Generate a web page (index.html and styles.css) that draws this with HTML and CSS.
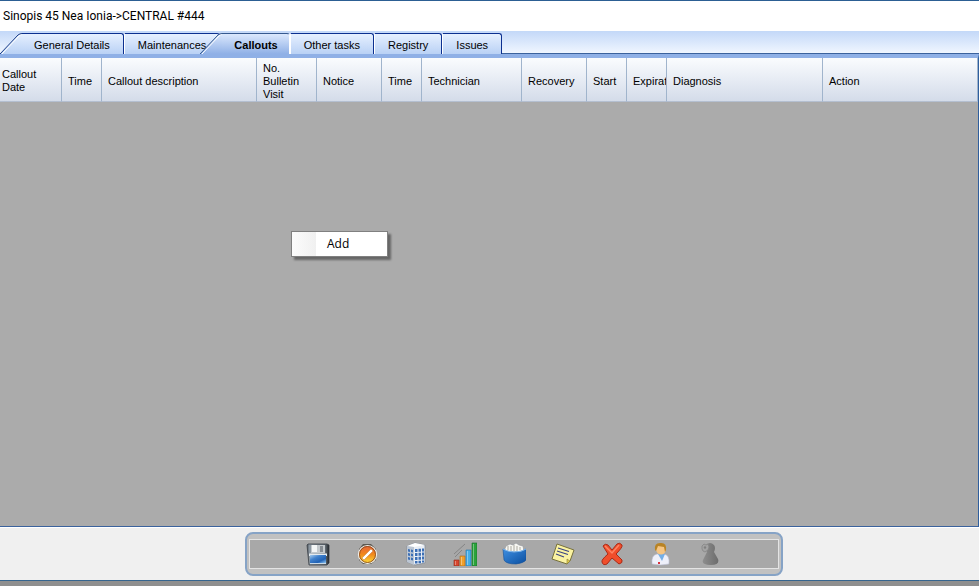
FILE: index.html
```html
<!DOCTYPE html>
<html lang="en">
<head>
    <meta charset="UTF-8">
    <meta name="viewport" content="width=device-width, initial-scale=1.0">
    <title>Sinopis 45 Nea Ionia-&gt;CENTRAL #444</title>
    <link rel="stylesheet" href="styles.css">
</head>
<body>
    <header class="title-bar">Sinopis 45 Nea Ionia-&gt;CENTRAL #444</header>

    <nav class="tabs" role="tablist">
        <button class="tab" role="tab">
            <svg class="slant" viewBox="0 0 22 21">
                <defs>
                    <linearGradient id="tabFill" x1="0" y1="0" x2="0" y2="1">
                        <stop offset="0" stop-color="#e6f0ff"/>
                        <stop offset="1" stop-color="#b9d1f5"/>
                    </linearGradient>
                </defs>
                <path d="M0 21L18 2Q20 .5 22 .5V21Z" fill="url(#tabFill)"/>
                <path d="M2 21L19 3Q20 1.500 22 1.500" fill="none" stroke="#fff"/>
                <path d="M0 21L18 2Q20 .5 22 .5" fill="none" stroke="#1a3c86"/>
            </svg>
            <span class="tab-label">General Details</span>
        </button>
        <button class="tab" role="tab"><span class="tab-label">Maintenances</span></button>
        <button class="tab active" role="tab" aria-selected="true">
            <svg class="slant" viewBox="0 0 22 21">
                <defs>
                    <linearGradient id="activeFill" x1="0" y1="0" x2="0" y2="1">
                        <stop offset="0" stop-color="#dbe8fd"/>
                        <stop offset="1" stop-color="#8fb0e6"/>
                    </linearGradient>
                </defs>
                <path d="M0 21L18 2Q20 .5 22 .5V21Z" fill="url(#activeFill)"/>
                <path d="M2 21L19 3Q20 1.500 22 1.500" fill="none" stroke="#fff"/>
                <path d="M0 21L18 2Q20 .5 22 .5" fill="none" stroke="#35598f"/>
            </svg>
            <span class="tab-label">Callouts</span>
        </button>
        <button class="tab" role="tab"><span class="tab-label">Other tasks</span></button>
        <button class="tab" role="tab"><span class="tab-label">Registry</span></button>
        <button class="tab" role="tab"><span class="tab-label">Issues</span></button>
    </nav>

    <main class="panel">
        <table class="grid">
            <colgroup>
                <col class="w62"><col class="w40"><col class="w155"><col class="w60">
                <col class="w65"><col class="w40"><col class="w100"><col class="w65">
                <col class="w40"><col class="w40"><col class="w156"><col>
            </colgroup>
            <thead>
                <tr>
                    <th>Callout Date</th>
                    <th>Time</th>
                    <th>Callout description</th>
                    <th>No. Bulletin Visit</th>
                    <th>Notice</th>
                    <th>Time</th>
                    <th>Technician</th>
                    <th>Recovery</th>
                    <th>Start</th>
                    <th>Expirat</th>
                    <th>Diagnosis</th>
                    <th>Action</th>
                </tr>
            </thead>
        </table>
        <div class="context-menu" role="menu">
            <button class="menu-item" role="menuitem">Add</button>
        </div>
    </main>

    <footer class="bottom">
        <div class="toolbar">
            <div class="toolbar-inner">
                <button class="tool" aria-label="Save">
                    <svg viewBox="0 0 24 24">
                        <defs>
                            <linearGradient id="disk" x1="0" y1="0" x2="1" y2="0">
                                <stop offset="0" stop-color="#4a525a"/><stop offset=".12" stop-color="#8f9aa4"/>
                                <stop offset=".85" stop-color="#5f6870"/><stop offset="1" stop-color="#1b1e22"/>
                            </linearGradient>
                            <linearGradient id="diskLabel" x1="0" y1="0" x2="1" y2="1">
                                <stop offset="0" stop-color="#a8cdf0"/><stop offset=".35" stop-color="#3f80cc"/>
                                <stop offset=".7" stop-color="#2161b4"/><stop offset="1" stop-color="#8fc8f5"/>
                            </linearGradient>
                        </defs>
                        <path d="M2 2H21L23 3V21L21 23H3L1 3Z" fill="url(#disk)" stroke="#3b4046" stroke-width=".8"/>
                        <rect x="5" y="3" width="14" height="8" fill="#c4c9cd"/>
                        <path d="M6 3h5v7H6z" fill="#f4f6f7"/>
                        <path d="M14 4h3v6h-3z" fill="#868c92"/>
                        <path d="M3 11.500h18v2.500H3z" fill="#e3e9ee"/>
                        <path d="M4 13h16v8H4z" fill="url(#diskLabel)"/>
                        <path d="M4 21h16v1H4z" fill="#c9d9e6"/>
                    </svg>
                </button>
                <button class="tool" aria-label="Cancel">
                    <svg viewBox="0 0 24 24">
                        <defs>
                            <linearGradient id="orange" x1="0" y1="0" x2="0" y2="1">
                                <stop offset="0" stop-color="#e8613a"/><stop offset=".5" stop-color="#f18a1c"/><stop offset="1" stop-color="#ffe13a"/>
                            </linearGradient>
                        </defs>
                        <path d="M8 2h8l5 5v11l-5 4H8l-4-4V7z" fill="#5c5852"/>
                        <circle cx="12.500" cy="12.500" r="9" fill="url(#orange)" stroke="#f2efe8" stroke-width="1.200"/>
                        <circle cx="12.500" cy="12.500" r="8" fill="none" stroke="#8a4a1a" stroke-width=".9"/>
                        <path d="M7 16L16 7L18 9L9 18Z" fill="#fff" stroke="#c07a3a" stroke-width=".5"/>
                    </svg>
                </button>
                <button class="tool" aria-label="Building">
                    <svg viewBox="0 0 24 24">
                        <path d="M3 4L11 1L21 3V21L11 23L3 20Z" fill="#e9eef5" stroke="#858d98" stroke-width=".8"/>
                        <path d="M3 4L11 1L21 3L10 5Z" fill="#fff"/>
                        <path d="M3 4L10 5V23L3 20Z" fill="#bcc6d3"/>
                        <g fill="#3c6fb5">
                            <path d="M4 7l2 .5v2.500l-2-.5zM7 7.500l2 .5v2.500l-2-.5zM4 11l2 .5V14l-2-.5zM7 11.500l2 .5v2.500l-2-.5zM4 15l2 .5V18l-2-.5zM7 15.500l2 .5v2.500l-2-.5z"/>
                            <path d="M11 7h2.500v3H11zM14.500 6.700H17v3h-2.500zM18 6.400h2v3h-2zM11 11h2.500v3H11zM14.500 10.800H17v3h-2.500zM18 10.500h2v3h-2zM11 15h2.500v3H11zM14.500 14.800H17v3h-2.500zM18 14.500h2v3h-2zM11 19h2.500v2.500H11zM14.500 18.800H17v2.500h-2.500zM18 18.500h2v2h-2z"/>
                        </g>
                    </svg>
                </button>
                <button class="tool" aria-label="Statistics">
                    <svg viewBox="0 0 24 24">
                        <path d="M1 12L12 2M2 15L9 8" stroke="#858585" fill="none"/>
                        <path d="M1 18h5v6H1z" fill="#d8482f" stroke="#8f2a1a" stroke-width=".6"/>
                        <path d="M7 14h5v10H7z" fill="#f0a02c" stroke="#ad6a14" stroke-width=".6"/>
                        <path d="M13 8h5v16h-5z" fill="#45aee8" stroke="#2474aa" stroke-width=".6"/>
                        <path d="M19 1h5v23h-5z" fill="#2ba33b" stroke="#16682a" stroke-width=".6"/>
                        <path d="M2.500 19v4M8.500 15v8M14.500 9v14M20.500 2v21" stroke="#fff" stroke-opacity=".35"/>
                    </svg>
                </button>
                <button class="tool" aria-label="Archive">
                    <svg viewBox="0 0 24 24">
                        <defs>
                            <linearGradient id="box" x1="0" y1="0" x2="1" y2="1">
                                <stop offset="0" stop-color="#3f8fe2"/><stop offset="1" stop-color="#0b4f9f"/>
                            </linearGradient>
                        </defs>
                        <path d="M2 9L4 4L8 2L11 3L14 1L17 3L21 4L22 9L12 12Z" fill="#f7f7f2" stroke="#8f9298" stroke-width=".6"/>
                        <path d="M6 4v4M9 4v5M12 3v6M15 4v5M18 5v3" stroke="#aaa89f"/>
                        <path d="M1 7Q6 10 12 10Q20 10 24 7V18Q22 21 14 22Q4 22 2 18Z" fill="url(#box)" stroke="#14519a" stroke-width=".6"/>
                        <path d="M1 7Q6 10 12 10Q20 10 24 7" fill="none" stroke="#82bbf0"/>
                    </svg>
                </button>
                <button class="tool" aria-label="Notes">
                    <svg viewBox="0 0 24 24">
                        <path d="M6 2L23 8L19 19L16 22L1 17Z" fill="#fbf3a2" stroke="#77713d"/>
                        <path d="M19 19L16 22L16 17Z" fill="#e2c949" stroke="#857c3b" stroke-width=".6"/>
                        <path d="M7 6L18 9.500M6 9L17 12.500M5 12L13 15" stroke="#3a4585" stroke-width="1.200"/>
                    </svg>
                </button>
                <button class="tool" aria-label="Delete">
                    <svg viewBox="0 0 24 24">
                        <path d="M3 4Q5 1 8 3L12 8L17 2Q20 0 22 3Q23 5 16 12L22 18Q23 21 19 22L12 16L7 22Q3 24 2 20Q1 18 8 12Z" fill="#f04e2b" stroke="#a92a17" stroke-linejoin="round"/>
                        <path d="M5 4L12 11L19 3" fill="none" stroke="#ff8462" stroke-width="1.500"/>
                    </svg>
                </button>
                <button class="tool" aria-label="User">
                    <svg viewBox="0 0 24 24">
                        <path d="M3 22Q2 13 8 12H15Q21 13 20 22Q12 24 3 22Z" fill="#eef0fa" stroke="#b5b8cc" stroke-width=".6"/>
                        <path d="M9 12L13 19L16 12Z" fill="#74aee6"/>
                        <ellipse cx="12" cy="7" rx="5" ry="5.500" fill="#f6c583"/>
                        <path d="M6 8Q5 1 11 1Q18 0 17 8L16 10L15 5L9 4L7 9Z" fill="#b88324"/>
                        <path d="M9 20h2v2H9z" fill="#d8323c"/>
                    </svg>
                </button>
                <button class="tool" aria-label="Contact">
                    <svg viewBox="0 0 24 24">
                        <defs>
                            <linearGradient id="pawn" x1="0" y1="0" x2="1" y2="0">
                                <stop offset="0" stop-color="#8e8e8e"/><stop offset="1" stop-color="#6c6c6c"/>
                            </linearGradient>
                        </defs>
                        <path d="M9 10Q6 5 8 3Q12 -1 16 3Q18 6 16 10L20 17Q22 23 13 23Q3 23 5 18Z" fill="url(#pawn)"/>
                        <path d="M4 4l2-2 2 1 2-1 1 3-1 3-3 2-2-1-1-2z" fill="#a3a3a3" stroke="#858585" stroke-width=".8"/>
                        <circle cx="7" cy="5.500" r="1.200" fill="#808080"/>
                    </svg>
                </button>
            </div>
        </div>
    </footer>
</body>
</html>
```
FILE: styles.css
```css
* {
    box-sizing: border-box;
}
body {
    display: flex;
    flex-direction: column;
    min-height: 100vh;
    margin: 0;
    font-family: "Liberation Sans", Arial, sans-serif;
    font-size: 11px;
    color: #000;
    background-color: #8f8f8f;
}
button {
    padding: 0;
    border: none;
    background: none;
    font: inherit;
    color: inherit;
}
.title-bar {
    height: 31px;
    padding: 0 3px;
    border-top: 1px solid #2c5f93;
    background-color: #fff;
    font-family: Roboto, sans-serif;
    font-size: 12px;
    line-height: 30px;
}

/* tabs */
.tabs {
    display: flex;
    height: 23px;
    padding-top: 2px;
    background: linear-gradient(#c3d8f8, #f0f6ff);
    border-bottom: 1px solid #3b629d;
}
.tab {
    display: flex;
    height: 21px;
}
.slant {
    width: 22px;
    height: 21px;
}
.tab-label {
    height: 21px;
    padding: 0 13px;
    border-top: 1px solid #0c3090;
    border-left: 1px solid #fff;
    border-right: 1px solid #0c3090;
    border-radius: 0 3px 0 0;
    background: linear-gradient(#e6f0ff, #b9d1f5);
    line-height: 22px;
}
.slant + .tab-label {
    padding-left: 12px;
    border-left: none;
}
.active {
    position: relative;
    margin-left: -20px;
    font-weight: bold;
}
.active .tab-label {
    padding-right: 11px;
    border-right-color: #fff;
    border-top-color: #35598f;
    background: linear-gradient(#dbe8fd, #8fb0e6);
}

/* callout grid */
.panel {
    position: relative;
    flex: 1;
    border-top: 4px solid #8fb0e6;
    border-right: 1px solid #2f5f9e;
    border-bottom: 1px solid #3b629d;
    background-color: #ababab;
}
.grid {
    width: 100%;
    table-layout: fixed;
    border-collapse: separate;
    border-spacing: 0;
    background: linear-gradient(#fafcfe, #d3dbe9);
}
.grid th {
    height: 44px;
    padding: 3px 0 0 6px;
    border-right: 1px solid #a0b4cc;
    border-bottom: 1px solid #b4bfd0;
    overflow: hidden;
    font-weight: normal;
    line-height: 13px;
    text-align: left;
}
.grid th:first-child {
    padding-left: 2px;
    padding-right: 16px;
}
.w40 {
    width: 40px;
}
.w60 {
    width: 60px;
}
.w62 {
    width: 62px;
}
.w65 {
    width: 65px;
}
.w100 {
    width: 100px;
}
.w155 {
    width: 155px;
}
.w156 {
    width: 156px;
}
.context-menu {
    position: absolute;
    top: 173px;
    left: 291px;
    width: 97px;
    padding: 2px;
    border: 1px solid #808080;
    background: linear-gradient(90deg, #fcfcfc, #f0f0f0) 0 0 / 24px 100% no-repeat #fff;
    box-shadow: 3px 3px 2px rgba(0, 0, 0, 0.4);
}
.menu-item {
    display: block;
    width: 100%;
    height: 20px;
    padding-left: 33px;
    font-family: "Open Sans", sans-serif;
    font-size: 12px;
    line-height: 20px;
    text-align: left;
}

/* bottom toolbar */
.bottom {
    margin-bottom: 5px;
    padding: 4px 20% 4px 25%;
    border-top: 1px solid #fff;
    border-bottom: 1px solid #35658f;
    background-color: #f0f0f0;
}
.toolbar {
    padding: 5px 2px;
    border: 2px solid #86a3c6;
    border-radius: 8px;
    background-color: #c1c1c1;
}
.toolbar-inner {
    display: flex;
    align-items: center;
    justify-content: center;
    gap: 25px;
    height: 30px;
    border: 1px solid #e4e4e4;
    background-color: #a8a8a8;
}
.tool {
    width: 24px;
    height: 24px;
}
.tool svg {
    display: block;
}
```
